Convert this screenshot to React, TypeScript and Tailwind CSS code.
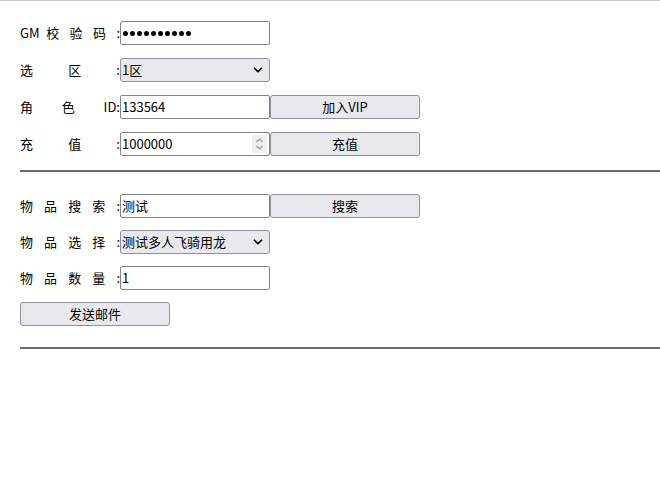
import { ChevronDown } from "lucide-react"

const font = "font-['Microsoft_YaHei','Noto_Sans_CJK_SC',sans-serif]"

function Label({ children }: { children: string }) {
  return (
    <span className="w-[100px] shrink-0 text-[13px] leading-[24px] text-black [text-align:justify] [text-align-last:justify]">
      {children}
    </span>
  )
}

function TextBox({ value }: { value: string }) {
  return (
    <div className="flex h-[24px] w-[150px] items-center rounded-[2px] border border-[#858585] bg-white px-[1px] text-[13px] text-black">
      <span>{value}</span>
    </div>
  )
}

function PasswordBox({ length }: { length: number }) {
  return (
    <div className="flex h-[24px] w-[150px] items-center gap-[2px] rounded-[2px] border border-[#858585] bg-white pl-[2px]">
      {Array.from({ length }).map((_, i) => (
        <span key={i} className="h-[5px] w-[5px] rounded-full bg-black" />
      ))}
    </div>
  )
}

function NumberBox({ value }: { value: string }) {
  return (
    <div className="flex h-[24px] w-[150px] items-center justify-between rounded-[2px] border border-[#858585] bg-white pl-[1px] pr-[2px] text-[13px] text-black">
      <span>{value}</span>
      <div className="flex h-[18px] w-[15px] items-center justify-center bg-[#efefef]">
        <svg width="9" height="14" viewBox="0 0 9 14" fill="none" stroke="#9a9a9a" strokeWidth="1.2">
          <path d="M1.5 5 L4.5 2 L7.5 5" />
          <path d="M1.5 9 L4.5 12 L7.5 9" />
        </svg>
      </div>
    </div>
  )
}

function SelectBox({ value }: { value: string }) {
  return (
    <div className="flex h-[24px] w-[150px] items-center justify-between rounded-[3px] border border-[#8f8f9d] bg-[#e9e9ed] pl-[1px] pr-[4px] text-[13px] text-black">
      <span>{value}</span>
      <ChevronDown className="h-[14px] w-[14px]" strokeWidth={3} />
    </div>
  )
}

function Btn({ children }: { children: string }) {
  return (
    <button className="h-[24px] w-[150px] rounded-[3px] border border-[#8f8f9d] bg-[#e9e9ed] text-[13px] text-black">
      {children}
    </button>
  )
}

function Row({ children }: { children: React.ReactNode }) {
  return <div className="flex h-[24px] items-center">{children}</div>
}

export default function App() {
  return (
    <div className={`${font} min-h-[494px] w-[660px] border-t border-[#cccccc] bg-white`}>
      <div className="flex flex-col gap-[13px] pl-[20px] pt-[20px]">
        <Row>
          <Label>GM 校 验 码 :</Label>
          <PasswordBox length={10} />
        </Row>
        <Row>
          <Label>选 区 :</Label>
          <SelectBox value="1区" />
        </Row>
        <Row>
          <Label>角 色 ID:</Label>
          <TextBox value="133564" />
          <Btn>加入VIP</Btn>
        </Row>
        <Row>
          <Label>充 值 :</Label>
          <NumberBox value="1000000" />
          <Btn>充值</Btn>
        </Row>
      </div>
      <hr className="ml-[20px] mt-[14px] border-t-[2px] border-[#6b6b6b]" />
      <div className="flex flex-col gap-[12px] pl-[20px] pt-[22px]">
        <Row>
          <Label>物 品 搜 索 :</Label>
          <TextBox value="测试" />
          <Btn>搜索</Btn>
        </Row>
        <Row>
          <Label>物 品 选 择 :</Label>
          <SelectBox value="测试多人飞骑用龙" />
        </Row>
        <Row>
          <Label>物 品 数 量 :</Label>
          <TextBox value="1" />
        </Row>
        <Row>
          <Btn>发送邮件</Btn>
        </Row>
      </div>
      <hr className="ml-[20px] mt-[21px] border-t-[2px] border-[#6b6b6b]" />
    </div>
  )
}
